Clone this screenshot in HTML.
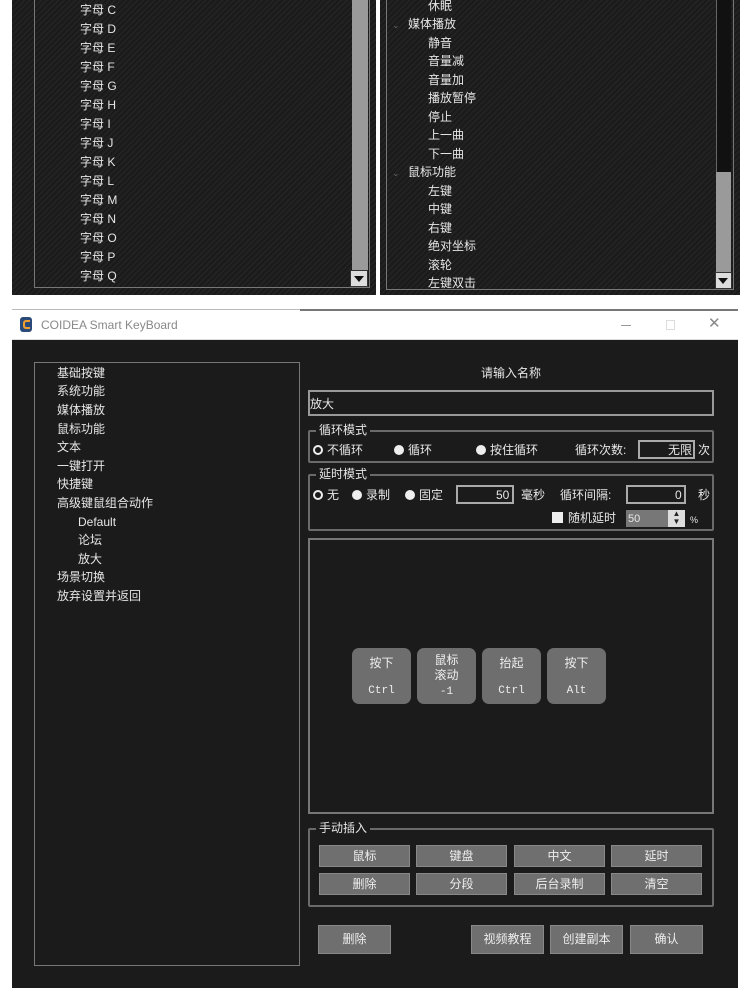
<!DOCTYPE html>
<html><head><meta charset="utf-8"><style>
*{margin:0;padding:0;box-sizing:border-box}
body{width:750px;height:993px;background:#fff;position:relative;overflow:hidden;font-family:"Liberation Sans","Noto Sans CJK SC",sans-serif;color:#e6e6e6;font-size:12px}
.a{position:absolute}
.stripe{background:repeating-linear-gradient(135deg,#222 0 2px,#1a1a1a 2px 4px)}
.t{position:absolute;white-space:nowrap;line-height:14px}
.box{position:absolute;border:1px solid #8a8a8a}
.grp{position:absolute;border:2px solid #6a6a6a;border-radius:2px}
.lg{position:absolute;top:-9px;left:6px;background:#1b1b1b;padding:0 3px;font-size:12px;line-height:14px}
.btn{position:absolute;background:#6f6f6f;border:1px solid #888;color:#eee;text-align:center;font-size:12px}
.key{position:absolute;background:#6e6e6e;border-radius:7px;color:#eee;text-align:center;font-size:12px;width:59px;height:56px;top:648px}
.rad{display:inline-block;width:10px;height:10px;border-radius:50%;background:#eee;vertical-align:-1px;margin-right:4px}
.rad.o{background:#1b1b1b;border:2px solid #eee}
</style></head><body>
<!-- top screenshot panels -->
<div class="a stripe" style="left:12px;top:0;width:364px;height:295px"></div>
<div class="box" style="left:34px;top:-2px;width:336px;height:290px;border-color:#777"></div>
<div class="a" style="left:352px;top:0;width:16px;height:270px;background:#9a9a9a"></div>
<div class="a" style="left:350px;top:270px;width:18px;height:17px;background:#ddd;border:1px solid #333"></div>
<div class="a" style="left:354px;top:276px;border-left:5px solid transparent;border-right:5px solid transparent;border-top:6px solid #111"></div>
<div class="a stripe" style="left:380px;top:0;width:360px;height:295px"></div>
<div class="box" style="left:386px;top:-2px;width:348px;height:292px;border-color:#777"></div>
<div class="a" style="left:716px;top:0;width:15px;height:172px;background:#111;border-left:1px solid #666"></div>
<div class="a" style="left:716px;top:172px;width:15px;height:100px;background:#9a9a9a"></div>
<div class="a" style="left:715px;top:272px;width:17px;height:17px;background:#ddd;border:1px solid #333"></div>
<div class="a" style="left:718px;top:278px;border-left:5px solid transparent;border-right:5px solid transparent;border-top:6px solid #111"></div>
<div style="font-size:12px">
<div class="t" style="left:80px;top:3px">字母 C</div><div class="t" style="left:80px;top:22px">字母 D</div><div class="t" style="left:80px;top:41px">字母 E</div><div class="t" style="left:80px;top:60px">字母 F</div><div class="t" style="left:80px;top:79px">字母 G</div><div class="t" style="left:80px;top:98px">字母 H</div><div class="t" style="left:80px;top:117px">字母 I</div><div class="t" style="left:80px;top:136px">字母 J</div><div class="t" style="left:80px;top:155px">字母 K</div><div class="t" style="left:80px;top:174px">字母 L</div><div class="t" style="left:80px;top:193px">字母 M</div><div class="t" style="left:80px;top:212px">字母 N</div><div class="t" style="left:80px;top:231px">字母 O</div><div class="t" style="left:80px;top:250px">字母 P</div><div class="t" style="left:80px;top:269px">字母 Q</div>
<div class="t" style="left:428px;top:-1px">休眠</div>
<div class="t" style="left:392px;top:18px;color:#666;font-size:9px">⌄</div><div class="t" style="left:408px;top:17px">媒体播放</div>
<div class="t" style="left:428px;top:36px">静音</div><div class="t" style="left:428px;top:54px">音量减</div><div class="t" style="left:428px;top:73px">音量加</div><div class="t" style="left:428px;top:91px">播放暂停</div><div class="t" style="left:428px;top:110px">停止</div><div class="t" style="left:428px;top:128px">上一曲</div><div class="t" style="left:428px;top:147px">下一曲</div>
<div class="t" style="left:392px;top:166px;color:#666;font-size:9px">⌄</div><div class="t" style="left:408px;top:165px">鼠标功能</div>
<div class="t" style="left:428px;top:184px">左键</div><div class="t" style="left:428px;top:202px">中键</div><div class="t" style="left:428px;top:221px">右键</div><div class="t" style="left:428px;top:239px">绝对坐标</div><div class="t" style="left:428px;top:258px">滚轮</div><div class="t" style="left:428px;top:276px">左键双击</div>
</div>
<!-- title bar -->
<div class="a" style="left:12px;top:309px;width:726px;height:1px;background:#bbb"></div>
<div class="a" style="left:300px;top:309px;width:438px;height:2px;background:#777"></div>
<div class="a" style="left:20px;top:317px;width:12px;height:15px;background:#2a4a7a;border-radius:3px"></div>
<div class="a" style="left:23px;top:320px;width:7px;height:9px;border:2px solid #f0a030;border-right:none;border-radius:3px 0 0 3px"></div>
<div class="t" style="left:41px;top:318px;color:#888;font-size:12px">COIDEA Smart KeyBoard</div>
<div class="a" style="left:621px;top:325px;width:10px;height:1px;background:#999"></div>
<div class="a" style="left:666px;top:320px;width:9px;height:10px;border:1px solid #ddd"></div>
<div class="t" style="left:708px;top:317px;color:#888;font-size:15px">✕</div>
<div class="a" style="left:12px;top:339px;width:726px;height:1px;background:#ddd"></div>
<!-- main window -->
<div class="a" style="left:12px;top:340px;width:726px;height:648px;background:#1b1b1b"></div>
<div class="box" style="left:34px;top:362px;width:266px;height:604px;border-color:#777"></div>
<div>
<div class="t" style="left:57px;top:366px">基础按键</div><div class="t" style="left:57px;top:384px">系统功能</div><div class="t" style="left:57px;top:403px">媒体播放</div><div class="t" style="left:57px;top:422px">鼠标功能</div><div class="t" style="left:57px;top:440px">文本</div><div class="t" style="left:57px;top:459px">一键打开</div><div class="t" style="left:57px;top:477px">快捷键</div><div class="t" style="left:57px;top:496px">高级键鼠组合动作</div>
<div class="t" style="left:78px;top:515px">Default</div><div class="t" style="left:78px;top:533px">论坛</div><div class="t" style="left:78px;top:552px">放大</div>
<div class="t" style="left:57px;top:570px">场景切换</div><div class="t" style="left:57px;top:589px">放弃设置并返回</div>
</div>
<div class="t" style="left:481px;top:366px">请输入名称</div>
<div class="a" style="left:308px;top:390px;width:406px;height:26px;border:2px solid #999"></div>
<div class="t" style="left:310px;top:397px">放大</div>
<div class="grp" style="left:308px;top:430px;width:406px;height:33px"><div class="lg">循环模式</div></div>
<div class="t" style="left:313px;top:443px"><span class="rad o"></span>不循环</div>
<div class="t" style="left:394px;top:443px"><span class="rad"></span>循环</div>
<div class="t" style="left:476px;top:443px"><span class="rad"></span>按住循环</div>
<div class="t" style="left:575px;top:443px">循环次数:</div>
<div class="a" style="left:638px;top:440px;width:57px;height:19px;border:2px solid #aaa"></div>
<div class="t" style="left:668px;top:443px">无限</div>
<div class="t" style="left:698px;top:443px">次</div>
<div class="grp" style="left:308px;top:474px;width:406px;height:57px"><div class="lg">延时模式</div></div>
<div class="t" style="left:313px;top:488px"><span class="rad o"></span>无</div>
<div class="t" style="left:352px;top:488px"><span class="rad"></span>录制</div>
<div class="t" style="left:405px;top:488px"><span class="rad"></span>固定</div>
<div class="a" style="left:456px;top:485px;width:58px;height:19px;border:2px solid #aaa"></div>
<div class="t" style="left:496px;top:488px">50</div>
<div class="t" style="left:521px;top:488px">毫秒</div>
<div class="t" style="left:560px;top:488px">循环间隔:</div>
<div class="a" style="left:626px;top:485px;width:60px;height:19px;border:2px solid #aaa"></div>
<div class="t" style="left:675px;top:488px">0</div>
<div class="t" style="left:698px;top:488px">秒</div>
<div class="a" style="left:552px;top:512px;width:11px;height:11px;background:#eee"></div>
<div class="t" style="left:568px;top:511px">随机延时</div>
<div class="a" style="left:626px;top:510px;width:59px;height:17px;background:#777"></div>
<div class="t" style="left:628px;top:512px;font-size:11px">50</div>
<div class="a" style="left:668px;top:510px;width:17px;height:17px;background:#ddd;color:#222;font-size:8px;text-align:center;line-height:8px">▲<br>▼</div>
<div class="t" style="left:690px;top:513px;font-size:9px">%</div>
<div class="a" style="left:308px;top:538px;width:406px;height:276px;border:2px solid #777"></div>
<div class="key" style="left:352px"><div style="margin-top:6px">按下</div><div style="margin-top:14px;font-family:'Liberation Mono',monospace;font-size:11px">Ctrl</div></div>
<div class="key" style="left:417px;line-height:15px"><div style="margin-top:5px">鼠标<br>滚动<br><span style="font-family:'Liberation Mono',monospace;font-size:11px">-1</span></div></div>
<div class="key" style="left:482px"><div style="margin-top:6px">抬起</div><div style="margin-top:14px;font-family:'Liberation Mono',monospace;font-size:11px">Ctrl</div></div>
<div class="key" style="left:547px"><div style="margin-top:6px">按下</div><div style="margin-top:14px;font-family:'Liberation Mono',monospace;font-size:11px">Alt</div></div>
<div class="grp" style="left:308px;top:828px;width:406px;height:79px"><div class="lg">手动插入</div></div>
<div class="btn" style="left:319px;top:845px;width:91px;height:22px;line-height:20px">鼠标</div>
<div class="btn" style="left:416px;top:845px;width:91px;height:22px;line-height:20px">键盘</div>
<div class="btn" style="left:514px;top:845px;width:91px;height:22px;line-height:20px">中文</div>
<div class="btn" style="left:611px;top:845px;width:91px;height:22px;line-height:20px">延时</div>
<div class="btn" style="left:319px;top:873px;width:91px;height:22px;line-height:20px">删除</div>
<div class="btn" style="left:416px;top:873px;width:91px;height:22px;line-height:20px">分段</div>
<div class="btn" style="left:514px;top:873px;width:91px;height:22px;line-height:20px">后台录制</div>
<div class="btn" style="left:611px;top:873px;width:91px;height:22px;line-height:20px">清空</div>
<div class="btn" style="left:318px;top:925px;width:73px;height:29px;line-height:27px">删除</div>
<div class="btn" style="left:471px;top:925px;width:73px;height:29px;line-height:27px">视频教程</div>
<div class="btn" style="left:550px;top:925px;width:73px;height:29px;line-height:27px">创建副本</div>
<div class="btn" style="left:630px;top:925px;width:73px;height:29px;line-height:27px">确认</div>
</body></html>
